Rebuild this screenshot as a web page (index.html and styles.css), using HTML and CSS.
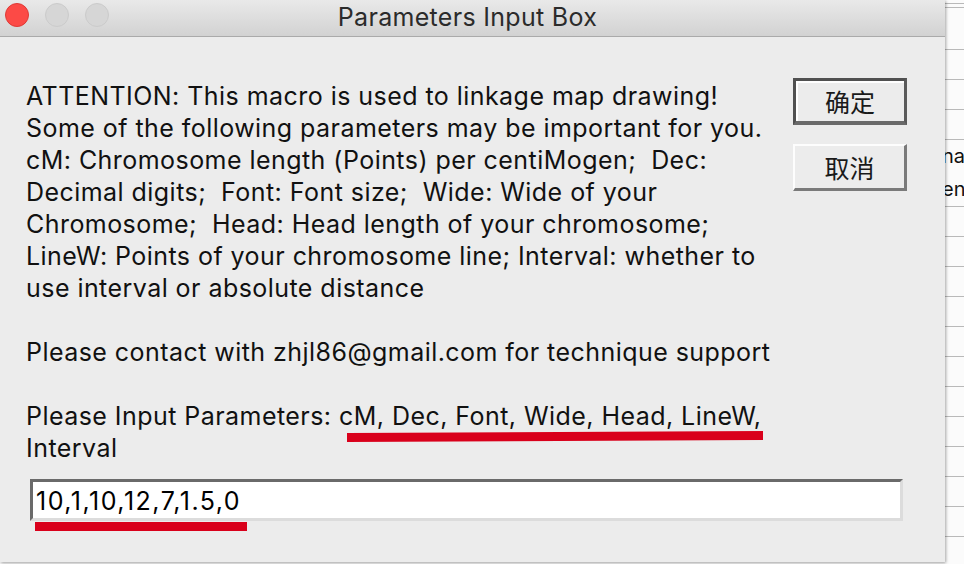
FILE: index.html
```html
<!DOCTYPE html>
<html lang="en">

<head>
    <meta charset="UTF-8">
    <meta name="viewport" content="width=device-width, initial-scale=1.0">
    <title>Parameters Input Box</title>
    <link rel="stylesheet" href="styles.css">
</head>

<body>
    <div class="dialog">
        <div class="titlebar">
            <div class="lights">
                <span class="light close"></span>
                <span class="light"></span>
                <span class="light"></span>
            </div>
            <div class="title">Parameters Input Box</div>
        </div>

        <div class="content">
            <div class="main">
                <p class="message">
                    ATTENTION: This macro is used to linkage map drawing!<br>
                    Some of the following parameters may be important for you.<br>
                    cM: Chromosome length (Points) per centiMogen;&nbsp; Dec:<br>
                    Decimal digits;&nbsp; Font: Font size;&nbsp; Wide: Wide of your<br>
                    Chromosome;&nbsp; Head: Head length of your chromosome;<br>
                    LineW: Points of your chromosome line; Interval: whether to<br>
                    use interval or absolute distance
                </p>
                <p class="message">Please contact with zhjl86@gmail.com for technique support</p>
                <p class="message">
                    Please Input Parameters: cM, Dec, Font, Wide, Head, LineW,<br>
                    Interval
                </p>
                <input class="params" type="text" value="10,1,10,12,7,1.5,0">
            </div>

            <div class="buttons">
                <button class="btn default">确定</button>
                <button class="btn">取消</button>
            </div>
        </div>

        <!-- red marks drawn over the screenshot -->
        <span class="mark mark-top"></span>
        <span class="mark mark-bottom"></span>
    </div>

    <div class="sheet">
        <div class="row head"></div>
        <div class="row"></div>
        <div class="row"></div>
        <div class="row"></div>
        <div class="row"></div>
        <div class="row text">na</div>
        <div class="row text last">enu</div>
        <div class="row"></div>
        <div class="row"></div>
        <div class="row"></div>
        <div class="row"></div>
        <div class="row"></div>
        <div class="row"></div>
        <div class="row"></div>
        <div class="row"></div>
        <div class="row"></div>
        <div class="row"></div>
        <div class="row"></div>
    </div>
</body>

</html>
```

FILE: styles.css
```css
body {
    margin: 0;
    width: 964px;
    height: 564px;
    overflow: hidden;
    display: flex;
    background-color: #f7f7f7;
    font-family: Inter, 'Liberation Sans', sans-serif;
}

.dialog {
    position: relative;
    width: 945px;
    height: 562px;
    flex-shrink: 0;
    background-color: #ececec;
    box-shadow: 1px 1px 3px rgba(0, 0, 0, 0.35);
    z-index: 1;
}

.titlebar {
    height: 36px;
    display: flex;
    align-items: center;
    background: linear-gradient(#e9e9e9, #d2d2d2);
    border-bottom: 1px solid #aaaaaa;
    position: relative;
}

.lights {
    display: flex;
    gap: 16px;
    padding-left: 5px;
    margin-top: -6px;
}

.light {
    width: 22px;
    height: 22px;
    border-radius: 50%;
    background-color: #d6d6d6;
    border: 1px solid #cbcbcb;
}

.light.close {
    background-color: #fc4a46;
    border-color: #de3a36;
}

.title {
    position: absolute;
    left: 0;
    right: 10px;
    text-align: center;
    font-size: 25px;
    letter-spacing: 0.3px;
    color: #2b2b2b;
    margin-top: -3px;
}

.content {
    display: flex;
    padding: 43px 0 0 26px;
}

.main {
    width: 767px;
}

.message {
    margin: 0 0 32px;
    font-size: 25px;
    letter-spacing: 0.45px;
    line-height: 32px;
    color: #111;
    white-space: nowrap;
}

.message:nth-of-type(3) {
    margin-bottom: 15px;
}

.params {
    display: block;
    box-sizing: border-box;
    width: 873px;
    height: 42px;
    margin-left: 4px;
    padding: 2px 3px 0;
    background: #fff;
    border-style: solid;
    border-width: 3px;
    border-color: #6a6a6a #dcdcdc #dcdcdc #6a6a6a;
    font-family: inherit;
    font-size: 25px;
    letter-spacing: 1.5px;
    color: #000;
    outline: none;
}

.buttons {
    display: flex;
    flex-direction: column;
    gap: 19px;
    margin-top: -2px;
}

.btn {
    box-sizing: border-box;
    width: 114px;
    height: 47px;
    background-color: #ececec;
    border-style: solid;
    border-width: 2px 3px 3px 2px;
    border-color: #fdfdfd #7a7a7a #7a7a7a #fdfdfd;
    font-family: 'Noto Sans CJK SC', sans-serif;
    font-size: 25px;
    color: #1a1a1a;
    padding: 0;
    cursor: pointer;
}

.btn.default {
    border-width: 3px 3px 4px 3px;
    border-color: #505050 #5a5a5a #6a6a6a #505050;
    box-shadow: inset 2px 2px 0 #ffffff;
}

.mark {
    position: absolute;
    height: 9px;
    background-color: #d9001b;
}

.mark-top {
    left: 347px;
    top: 432px;
    width: 416px;
    transform: rotate(-0.25deg);
}

.mark-bottom {
    left: 35px;
    top: 522px;
    width: 212px;
}

.sheet {
    flex: 1;
    background-color: #fbfbfb;
    padding-top: 3px;
    overflow: hidden;
}

.row {
    height: 29px;
    border-bottom: 1px solid #b9b9b9;
}

.row.head {
    height: 3px;
    border-top: 1px solid #b9b9b9;
    margin-bottom: 11px;
}

.row:nth-child(2) {
    height: 30px;
}

.row.text {
    height: 33px;
    border-bottom: none;
    font-size: 20px;
    line-height: 33px;
    text-indent: -3px;
    white-space: nowrap;
    color: #111;
}

.row.text.last {
    border-bottom: 1px solid #b9b9b9;
}
```
